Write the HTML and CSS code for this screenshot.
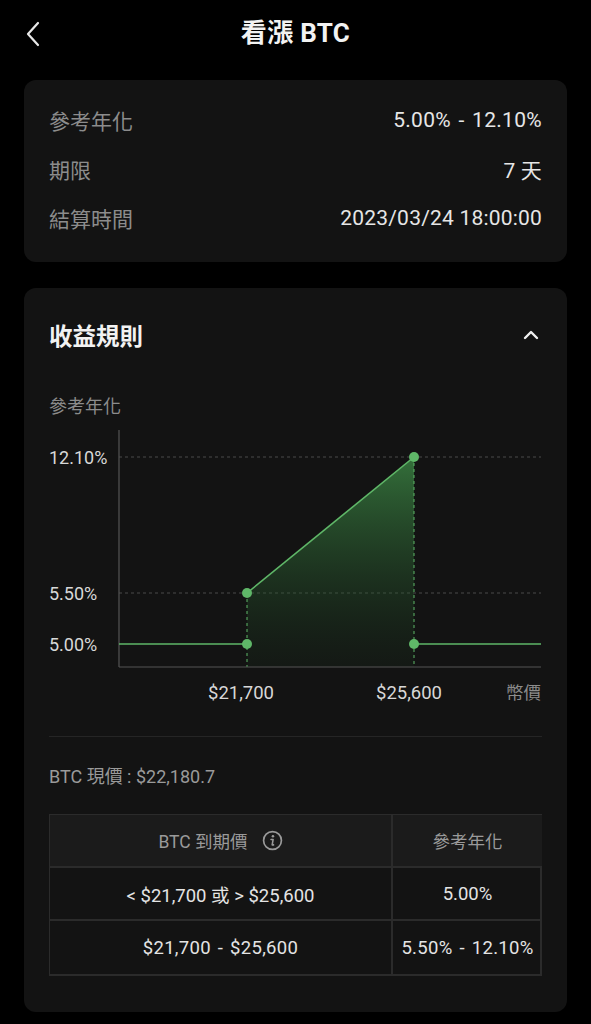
FILE: index.html
```html
<!DOCTYPE html>
<html lang="zh-Hant">
<head>
<meta charset="utf-8">
<link rel="stylesheet" href="styles.css">
</head>
<body>
<header class="topbar">
  <svg class="back" width="16" height="26" viewBox="0 0 16 26"><path d="M13 2 L3 13 L13 24" fill="none" stroke="#e8e8e8" stroke-width="2.2" stroke-linecap="round" stroke-linejoin="round"/></svg>
  <h1 class="title">看漲 BTC</h1>
</header>

<section class="card info">
  <div class="row"><span class="label">參考年化</span><span class="value spaced">5.00% - 12.10%</span></div>
  <div class="row"><span class="label">期限</span><span class="value">7 天</span></div>
  <div class="row"><span class="label">結算時間</span><span class="value">2023/03/24 18:00:00</span></div>
</section>

<section class="card rules">
  <div class="rules-head">
    <h2 class="rules-title">收益規則</h2>
    <svg width="18" height="12" viewBox="0 0 18 12"><path d="M3 9 L9 3 L15 9" fill="none" stroke="#f0f0f0" stroke-width="2.4" stroke-linecap="round" stroke-linejoin="round"/></svg>
  </div>
  <div class="axis-title">參考年化</div>
  <svg class="chart" width="492" height="285" viewBox="0 0 492 285">
    <defs>
      <linearGradient id="g" x1="0" y1="0" x2="0" y2="1">
        <stop offset="0" stop-color="#3f8f48" stop-opacity="0.75"/>
        <stop offset="1" stop-color="#1a3a1e" stop-opacity="0.15"/>
      </linearGradient>
    </defs>
    <line x1="70" y1="32" x2="492" y2="32" stroke="#4a4a4a" stroke-width="1" stroke-dasharray="3 3"/>
    <line x1="70" y1="168" x2="492" y2="168" stroke="#4a4a4a" stroke-width="1" stroke-dasharray="3 3"/>
    <polygon points="198,168 365,32 365,242 198,242" fill="url(#g)"/>
    <line x1="198" y1="168" x2="198" y2="242" stroke="#5fb768" stroke-width="1" stroke-dasharray="3 3"/>
    <line x1="365" y1="32" x2="365" y2="242" stroke="#5fb768" stroke-width="1" stroke-dasharray="3 3"/>
    <line x1="70" y1="5" x2="70" y2="242" stroke="#555" stroke-width="1.2"/>
    <line x1="70" y1="242" x2="492" y2="242" stroke="#555" stroke-width="1.2"/>
    <polyline points="70,219 198,219" fill="none" stroke="#5fb768" stroke-width="1.6"/>
    <polyline points="198,168 365,32" fill="none" stroke="#5fb768" stroke-width="1.6"/>
    <polyline points="365,219 492,219" fill="none" stroke="#5fb768" stroke-width="1.6"/>
    <circle cx="198" cy="168" r="5" fill="#5fb768"/>
    <circle cx="365" cy="32" r="5" fill="#5fb768"/>
    <circle cx="198" cy="219" r="5" fill="#5fb768"/>
    <circle cx="365" cy="219" r="5" fill="#5fb768"/>
    <text class="ylab" x="0" y="38.5">12.10%</text>
    <text class="ylab" x="0" y="174.5">5.50%</text>
    <text class="ylab" x="0" y="225.5">5.00%</text>
    <text class="xlab" x="192" y="274" text-anchor="middle">$21,700</text>
    <text class="xlab" x="360" y="274" text-anchor="middle">$25,600</text>
    <text class="xlab unit" x="492" y="274" text-anchor="end">幣價</text>
  </svg>
  <div class="divider"></div>
  <div class="spot">BTC 現價 : $22,180.7</div>
  <div class="table">
    <div class="cell head">BTC 到期價
      <svg class="info-ic" width="21" height="21" viewBox="0 0 20 20"><circle cx="10" cy="10" r="8.5" fill="none" stroke="#9a9a9a" stroke-width="1.6"/><circle cx="10.4" cy="6" r="1.2" fill="#9a9a9a"/><path d="M8.6 9 H10.6 L9.7 14.2 H11" fill="none" stroke="#9a9a9a" stroke-width="1.5" stroke-linecap="round" stroke-linejoin="round"/></svg>
    </div>
    <div class="cell head">參考年化</div>
    <div class="cell">&lt; $21,700 或 &gt; $25,600</div>
    <div class="cell">5.00%</div>
    <div class="cell spaced">$21,700 - $25,600</div>
    <div class="cell spaced">5.50% - 12.10%</div>
  </div>
</section>
</body>
</html>
```

FILE: styles.css
```css
* { box-sizing: border-box; }
html, body { background: #000; }
body {
  margin: 0;
  width: 591px;
  font-family: Roboto, "Noto Sans CJK TC", "Noto Sans", sans-serif;
  color: #e8e8e8;
}
.topbar {
  position: relative;
  height: 66px;
  display: flex;
  align-items: center;
  justify-content: center;
}
.back { position: absolute; left: 25px; top: 21px; }
.title {
  margin: 0;
  font-size: 26px;
  line-height: 30px;
  font-weight: 700;
  color: #f2f2f2;
  letter-spacing: 0.3px;
}
.card {
  margin: 14px 24px 0 24px;
  background: #131313;
  border-radius: 12px;
  padding: 0 25px;
}
.info { padding-top: 15px; padding-bottom: 20px; }
.row {
  height: 49px;
  display: flex;
  align-items: center;
  justify-content: space-between;
  font-size: 21px;
}
.label { color: #8c8c8c; }
.value { color: #e6e6e6; letter-spacing: 0.2px; }
.spaced { word-spacing: 2px; letter-spacing: 0.3px; }
.rules { margin-top: 26px; padding-top: 32px; padding-bottom: 36px; }
.rules-head {
  height: 30px;
  display: flex;
  align-items: center;
  justify-content: space-between;
  padding-right: 2px;
}
.rules-title { margin: 0; font-size: 23.5px; font-weight: 700; color: #f2f2f2; }
.axis-title {
  margin-top: 45px;
  font-size: 18px;
  line-height: 24px;
  color: #8c8c8c;
}
.chart { display: block; margin-top: 6px; }
.ylab { font-family: Roboto, "Noto Sans CJK TC", sans-serif; font-size: 18px; fill: #d8d8d8; }
.xlab { font-family: Roboto, "Noto Sans CJK TC", sans-serif; font-size: 18.5px; fill: #d8d8d8; }
.unit { fill: #8c8c8c; font-size: 17.5px; }
.divider { height: 1px; background: #252525; margin-top: 26px; }
.spot {
  margin-top: 28px;
  font-size: 18px;
  line-height: 24px;
  color: #9a9a9a;
}
.table {
  margin-top: 25px;
  display: grid;
  grid-template-columns: 343px 149px;
  border: 1px solid #2b2b2b;
  border-right-width: 2px;
  border-bottom-width: 2px;
}
.cell {
  height: 53px;
  display: flex;
  align-items: center;
  justify-content: center;
  gap: 14px;
  font-size: 18.5px;
  color: #e4e4e4;
  border-right: 2px solid #2b2b2b;
  border-bottom: 2px solid #2b2b2b;
}
.cell:nth-child(2n) { border-right: none; }
.cell:nth-last-child(-n+2) { border-bottom: none; }
.head { background: #1b1b1b; color: #9a9a9a; font-size: 17.5px; }
.info-ic { display: block; }
```
